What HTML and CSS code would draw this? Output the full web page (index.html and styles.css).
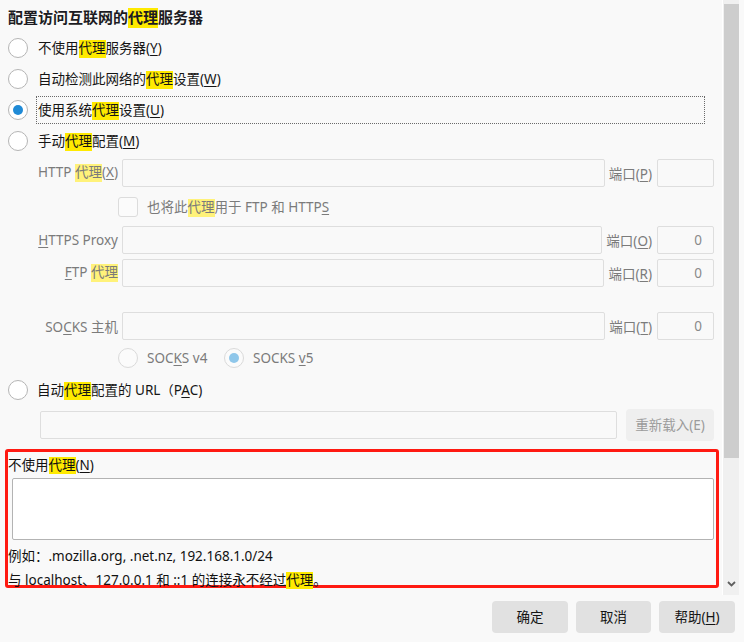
FILE: index.html
```html
<!DOCTYPE html>
<html lang="zh-CN">
<head>
<meta charset="utf-8">
<title>连接设置</title>
<link rel="stylesheet" href="styles.css">
</head>
<body>
<div class="window">
  <div class="main">
    <div class="content">
      <h1 class="title">配置访问互联网的<mark>代理</mark>服务器</h1>
      <div class="radio-list">
        <div class="radio-row"><span class="radio"></span><span class="radio-label">不使用<mark>代理</mark>服务器(<u>Y</u>)</span></div>
        <div class="radio-row"><span class="radio"></span><span class="radio-label">自动检测此网络的<mark>代理</mark>设置(<u>W</u>)</span></div>
        <div class="radio-row"><span class="radio checked"></span><span class="radio-label focused">使用系统<mark>代理</mark>设置(<u>U</u>)</span></div>
        <div class="radio-row"><span class="radio"></span><span class="radio-label">手动<mark>代理</mark>配置(<u>M</u>)</span></div>
      </div>

      <div class="manual disabled">
        <div class="field-row row-http">
          <span class="field-label">HTTP <mark>代理</mark>(<u>X</u>)</span>
          <span class="input"></span>
          <span class="port-label">端口(<u>P</u>)</span>
          <span class="input port"></span>
        </div>
        <div class="check-row">
          <span class="checkbox"></span>
          <span class="check-label">也将此<mark>代理</mark>用于 FTP 和 HTTP<u>S</u></span>
        </div>
        <div class="field-row row-https">
          <span class="field-label"><u>H</u>TTPS Proxy</span>
          <span class="input"></span>
          <span class="port-label">端口(<u>O</u>)</span>
          <span class="input port">0</span>
        </div>
        <div class="field-row row-ftp">
          <span class="field-label"><u>F</u>TP <mark>代理</mark></span>
          <span class="input"></span>
          <span class="port-label">端口(<u>R</u>)</span>
          <span class="input port">0</span>
        </div>
        <div class="field-row row-socks">
          <span class="field-label">SO<u>C</u>KS 主机</span>
          <span class="input"></span>
          <span class="port-label">端口(<u>T</u>)</span>
          <span class="input port">0</span>
        </div>
        <div class="socks-row">
          <span class="socks-option first"><span class="radio small-dis"></span><span class="socks-label">SOC<u>K</u>S v4</span></span>
          <span class="socks-option"><span class="radio small-dis checked"></span><span class="socks-label">SOCKS <u>v</u>5</span></span>
        </div>
      </div>

      <div class="radio-row pac-row"><span class="radio"></span><span class="pac-label">自动<mark>代理</mark>配置的 URL（P<u>A</u>C)</span></div>
      <div class="pac-input-row">
        <span class="input pac-input"></span>
        <span class="reload-btn">重新载入(E)</span>
      </div>

      <section class="no-proxy">
        <div class="np-label">不使用<mark>代理</mark>(<u>N</u>)</div>
        <div class="np-textarea"></div>
        <div class="np-line np-first">例如：.mozilla.org, .net.nz, 192.168.1.0/24</div>
        <div class="np-line">与 localhost、127.0.0.1 和 ::1 的连接永不经过<mark>代理</mark>。</div>
      </section>
    </div>

    <div class="scrollbar">
      <div class="thumb"></div>
      <div class="track-fill"></div>
      <svg class="chevron" width="9" height="6" viewBox="0 0 9 6"><path d="M1 1 L4.5 4.5 L8 1" fill="none" stroke="#5f5f5f" stroke-width="1.8"/></svg>
    </div>
  </div>

  <div class="footer">
    <span class="btn btn-ok">确定</span>
    <span class="btn btn-cancel">取消</span>
    <span class="btn btn-help">帮助(<u>H</u>)</span>
  </div>
</div>
</body>
</html>
```

FILE: styles.css
```css
* { box-sizing: border-box; }

html, body {
  margin: 0;
  padding: 0;
}

body {
  width: 744px;
  height: 642px;
  overflow: hidden;
  background: #f9f9f9;
  font-family: "Noto Sans", "Noto Sans CJK SC", sans-serif;
  font-size: 13.5px;
  color: #151515;
}

mark {
  display: inline-block;
  background: #ffea00;
  color: inherit;
  line-height: 1.3;
}

u { text-decoration: underline; text-underline-offset: 2px; }

.window {
  display: flex;
  flex-direction: column;
  width: 744px;
  height: 642px;
}

.main {
  display: flex;
  height: 595px;
}

.content {
  width: 722px;
  padding: 0 8px;
  display: flex;
  flex-direction: column;
}

.title {
  margin: 0 0 5px 0;
  padding-top: 7px;
  font-size: 15px;
  line-height: 20px;
  font-weight: bold;
  color: #1c1b22;
}

.radio-row {
  display: flex;
  align-items: center;
  height: 31px;
}

.radio {
  flex: none;
  position: relative;
  width: 20px;
  height: 20px;
  border-radius: 50%;
  border: 1px solid #b5b5b5;
  background: #ffffff;
}

.radio.checked::after {
  content: "";
  position: absolute;
  left: 4px;
  top: 4px;
  width: 10px;
  height: 10px;
  border-radius: 50%;
  background: #1f8ad6;
}

.radio-label {
  flex: 1;
  margin-left: 8px;
  margin-right: 9px;
  padding-left: 1px;
  height: 28px;
  line-height: 26px;
  border: 1px dotted transparent;
}

.radio-label.focused {
  border-color: #6a6a6a;
}

/* manual proxy section (disabled look) */
.manual {
  color: #7b7b7b;
}

.manual mark {
  background: #fff27a;
}

.field-row {
  display: flex;
  align-items: center;
  gap: 4px;
  height: 28px;
}

.row-http { margin-top: 2px; }
.row-https { margin-top: 9px; }
.row-ftp { margin-top: 5px; }
.row-socks { margin-top: 25px; }

.field-label {
  flex: none;
  width: 110px;
  text-align: right;
  white-space: nowrap;
}

.input {
  flex: 1;
  height: 28px;
  border: 1px solid #dedede;
  border-radius: 2px;
  background: #f9f9f9;
}

.port-label {
  flex: none;
  padding-right: 1px;
  white-space: nowrap;
}

.input.port {
  flex: none;
  width: 57px;
  text-align: right;
  padding-right: 11px;
  line-height: 26px;
  color: #8a8a8a;
}

.check-row {
  display: flex;
  align-items: center;
  margin-top: 10px;
  height: 20px;
  padding-left: 110px;
}

.checkbox {
  flex: none;
  width: 20px;
  height: 20px;
  border: 1px solid #dcdcdc;
  border-radius: 3px;
  background: #fbfbfb;
}

.check-label {
  margin-left: 9px;
}

.socks-row {
  display: flex;
  align-items: center;
  margin-top: 8px;
  height: 20px;
  padding-left: 110px;
}

.socks-option {
  display: flex;
  align-items: center;
}

.socks-option.first {
  width: 106px;
}

.radio.small-dis {
  border-color: #dadada;
  background: #fbfbfb;
}

.radio.small-dis.checked::after {
  background: #8fc7ea;
}

.socks-label {
  margin-left: 9px;
}

.pac-row {
  margin-top: 12px;
  height: 20px;
}

.pac-label {
  margin-left: 9px;
}

.pac-input-row {
  display: flex;
  align-items: center;
  margin-top: 9px;
  margin-left: 32px;
  height: 32px;
  gap: 9px;
}

.pac-input {
  height: 28px;
}

.reload-btn {
  flex: none;
  width: 88px;
  height: 32px;
  line-height: 32px;
  text-align: center;
  border-radius: 4px;
  background: #efefef;
  color: #9b9b9b;
}

/* no proxy section */
.no-proxy {
  margin: 8px -5px 0 -3px;
  height: 139px;
  border: 3px solid #ff1a12;
  border-radius: 3px;
  color: #111;
}

.np-label {
  padding-top: 3px;
  line-height: 20px;
}

.np-textarea {
  margin: 3px 2px 0 4px;
  height: 62px;
  background: #ffffff;
  border: 1px solid #b3b3b3;
  border-radius: 2px;
}

.np-line {
  line-height: 24px;
  white-space: nowrap;
}

.np-first {
  margin-top: 4px;
}

/* scrollbar */
.scrollbar {
  flex: none;
  width: 17px;
  height: 595px;
  border-left: 1px solid #ffffff;
  background: #f0f0f0;
  display: flex;
  flex-direction: column;
  align-items: center;
  padding-top: 4px;
}

.thumb {
  width: 15px;
  height: 454px;
  background: #cdcdcd;
}

.track-fill {
  flex: 1;
}

.chevron {
  margin-bottom: 8px;
}

/* footer buttons */
.footer {
  display: flex;
  justify-content: flex-end;
  gap: 8px;
  padding: 6px 9px 0 0;
}

.btn {
  height: 32px;
  line-height: 32px;
  text-align: center;
  background: #e1e1e1;
  border-radius: 4px;
  color: #151515;
}

.btn-ok { width: 76px; }
.btn-cancel { width: 75px; }
.btn-help { width: 76px; }
```
